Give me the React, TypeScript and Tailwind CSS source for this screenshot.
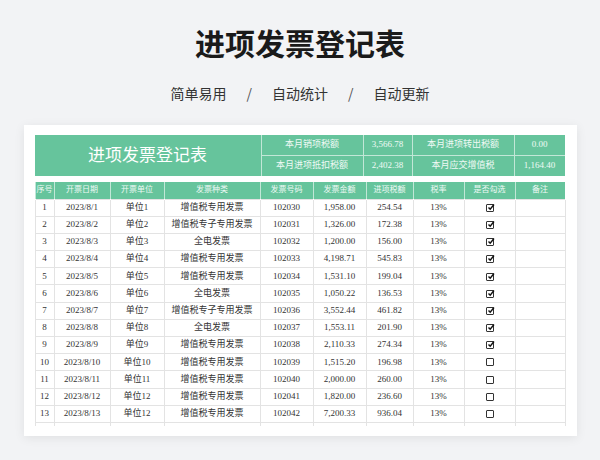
import React from "react";

const rows = [
  ["1","2023/8/1","单位1","增值税专用发票","102030","1,958.00","254.54","13%",true],
  ["2","2023/8/2","单位2","增值税专子专用发票","102031","1,326.00","172.38","13%",true],
  ["3","2023/8/3","单位3","全电发票","102032","1,200.00","156.00","13%",true],
  ["4","2023/8/4","单位4","增值税专用发票","102033","4,198.71","545.83","13%",true],
  ["5","2023/8/5","单位5","增值税专用发票","102034","1,531.10","199.04","13%",true],
  ["6","2023/8/6","单位6","全电发票","102035","1,050.22","136.53","13%",true],
  ["7","2023/8/7","单位7","增值税专子专用发票","102036","3,552.44","461.82","13%",true],
  ["8","2023/8/8","单位8","全电发票","102037","1,553.11","201.90","13%",true],
  ["9","2023/8/9","单位9","增值税专用发票","102038","2,110.33","274.34","13%",true],
  ["10","2023/8/10","单位10","增值税专用发票","102039","1,515.20","196.98","13%",false],
  ["11","2023/8/11","单位11","增值税专用发票","102040","2,000.00","260.00","13%",false],
  ["12","2023/8/12","单位12","增值税专用发票","102041","1,820.00","236.60","13%",false],
  ["13","2023/8/13","单位12","增值税专用发票","102042","7,200.33","936.04","13%",false],
  ["14","","","","","","","",false],
  ["15","","","","","","","",false],
];
const widths = [19,56,54,96,53,53,47,51,51,50];
const heads = ["序号","开票日期","开票单位","发票种类","发票号码","发票金额","进项税额","税率","是否勾选","备注"];

export default function App() {
  const serif = { fontFamily: '"Liberation Serif","Noto Sans CJK SC",serif' };
  return (
    <div className="w-[600px] h-[460px] bg-[#f2f3f5] overflow-hidden flex flex-col items-center" style={{ fontFamily: '"Noto Sans CJK SC",sans-serif' }}>
      <div className="mt-[22px] text-[30px] leading-[40px] font-bold text-[#1a1a1a]">进项发票登记表</div>
      <div className="mt-[21px] flex gap-[20px] text-[14px] text-[#333] leading-[20px]">
        <span>简单易用</span><span className="text-[#555]">/</span><span>自动统计</span><span className="text-[#555]">/</span><span>自动更新</span>
      </div>
      <div className="mt-[22px] w-[553px] h-[311px] bg-white shadow-[0_2px_10px_rgba(0,0,0,0.08)] pl-[11px] pt-[10px] text-[9px] text-[#333]" style={serif}>
        <div className="flex w-[530px] h-[41px] bg-[#66c49c] text-white/90">
          <div className="w-[227px] border-r border-white/60 flex items-center justify-center text-[17px] text-white">进项发票登记表</div>
          <div className="flex-1 flex flex-col">
            {[["本月销项税额","3,566.78","本月进项转出税额","0.00"],["本月进项抵扣税额","2,402.38","本月应交增值税","1,164.40"]].map((r,i)=>(
              <div key={i} className={`flex flex-1 ${i===0?"border-b border-white/60":""}`}>
                <div className="w-[102px] border-r border-white/60 flex items-center justify-center">{r[0]}</div>
                <div className="w-[49px] border-r border-white/60 flex items-center justify-center">{r[1]}</div>
                <div className="w-[102px] border-r border-white/60 flex items-center justify-center">{r[2]}</div>
                <div className="flex-1 flex items-center justify-center">{r[3]}</div>
              </div>
            ))}
          </div>
        </div>
        <div className="mt-[6px] h-[244px] overflow-hidden">
        <table className="w-[530px] border-collapse table-fixed">
          <colgroup>{widths.map((w,i)=><col key={i} style={{width:w}}/>)}</colgroup>
          <thead>
            <tr className="h-[17px] bg-[#66c49c] text-white/90">
              {heads.map((h,i)=><th key={i} className="font-normal border-x border-white/60 text-[8px]">{h}</th>)}
            </tr>
          </thead>
          <tbody>
            {rows.map((r,i)=>(
              <tr key={i} className="h-[17.2px]">
                {r.slice(0,8).map((c,j)=><td key={j} className="border border-[#e3e3e3] text-center whitespace-nowrap p-0">{c as string}</td>)}
                <td className="border border-[#e3e3e3] text-center p-0">
                  <span className="inline-block w-[8px] h-[8px] border border-[#333] rounded-[1px] relative align-middle">
                    {r[8] && <svg viewBox="0 0 8 8" className="absolute -top-[2px] left-0 w-[8px] h-[8px]"><path d="M1.5 4.5 L3.2 6.3 L7 1.5" stroke="#111" strokeWidth="1.4" fill="none"/></svg>}
                  </span>
                </td>
                <td className="border border-[#e3e3e3] p-0"></td>
              </tr>
            ))}
          </tbody>
        </table>
        </div>
      </div>
    </div>
  );
}
